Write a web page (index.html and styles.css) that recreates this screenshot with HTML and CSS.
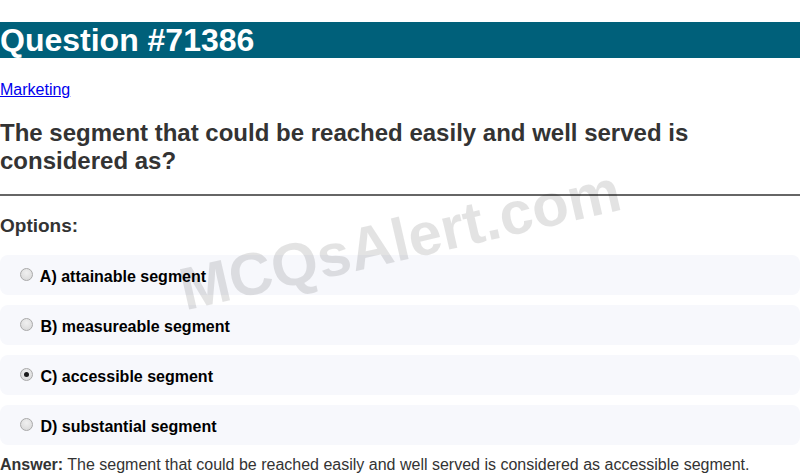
FILE: index.html
```html
<!DOCTYPE html>
<html>
<head>
<meta charset="utf-8">
<link rel="stylesheet" href="styles.css">
</head>
<body>
<div class="page">
  <h1 class="title">Question #71386</h1>
  <a class="cat" href="#">Marketing</a>
  <h2 class="question">The segment that could be reached easily and well served is considered as?</h2>
  <hr class="rule">
  <h3 class="opts-head">Options:</h3>
  <div class="options">
    <label class="option"><input type="radio" name="q"> A) attainable segment</label>
    <label class="option"><input type="radio" name="q"> B) measureable segment</label>
    <label class="option"><input type="radio" name="q" checked> C) accessible segment</label>
    <label class="option"><input type="radio" name="q"> D) substantial segment</label>
  </div>
  <p class="answer"><b>Answer:</b> The segment that could be reached easily and well served is considered as accessible segment.</p>
  <div class="watermark">MCQsAlert.com</div>
</div>
</body>
</html>
```

FILE: styles.css
```css
html, body {
  margin: 0;
  padding: 0;
  background: #fff;
}
body {
  font-family: "Liberation Sans", Arial, sans-serif;
  color: #333;
  overflow: hidden;
}
.page {
  position: relative;
  padding-top: 22px;
}
.title {
  margin: 0;
  background: #00607a;
  color: #fff;
  font-size: 32px;
  line-height: 36px;
  font-weight: bold;
}
.cat {
  display: inline-block;
  margin-top: 23px;
  font-size: 16px;
  line-height: 18px;
  color: #00e;
}
.question {
  margin: 20px 0 0;
  font-size: 24px;
  line-height: 28px;
  font-weight: bold;
  color: #333;
}
.rule {
  margin: 19px 0 0;
  border: 0;
  border-top: 2px solid #666;
  height: 0;
}
.opts-head {
  margin: 19px 0 0;
  font-size: 19px;
  line-height: 22px;
  font-weight: bold;
  color: #333;
}
.options {
  display: flex;
  flex-direction: column;
  gap: 10px;
  margin-top: 18px;
}
.option {
  box-sizing: border-box;
  display: flex;
  align-items: center;
  height: 40px;
  padding: 3px 0 0 15px;
  background: #f7f8fc;
  border-radius: 8px;
  font-size: 16px;
  font-weight: bold;
  color: #000;
  white-space: pre;
}
.option input {
  -webkit-appearance: none;
  appearance: none;
  box-sizing: border-box;
  width: 13px;
  height: 13px;
  margin: 0 3px 5px 5px;
  border: 1px solid #a9a9a9;
  border-radius: 50%;
  background: radial-gradient(circle at 50% 35%, #f0f0f0 0%, #d6d6d6 100%);
  display: flex;
  align-items: center;
  justify-content: center;
}
.option input:checked::after {
  content: "";
  width: 5px;
  height: 5px;
  border-radius: 50%;
  background: #1a1a1a;
}
.answer {
  margin: 11px 0 0;
  font-size: 16px;
  line-height: 18px;
  color: #333;
}
.answer b {
  color: #333;
}
.watermark {
  position: absolute;
  left: 400px;
  top: 240px;
  transform: translate(-50%, -50%) rotate(-13deg);
  font-size: 60px;
  font-weight: bold;
  color: rgba(0, 0, 0, 0.11);
  white-space: nowrap;
  pointer-events: none;
}
```
